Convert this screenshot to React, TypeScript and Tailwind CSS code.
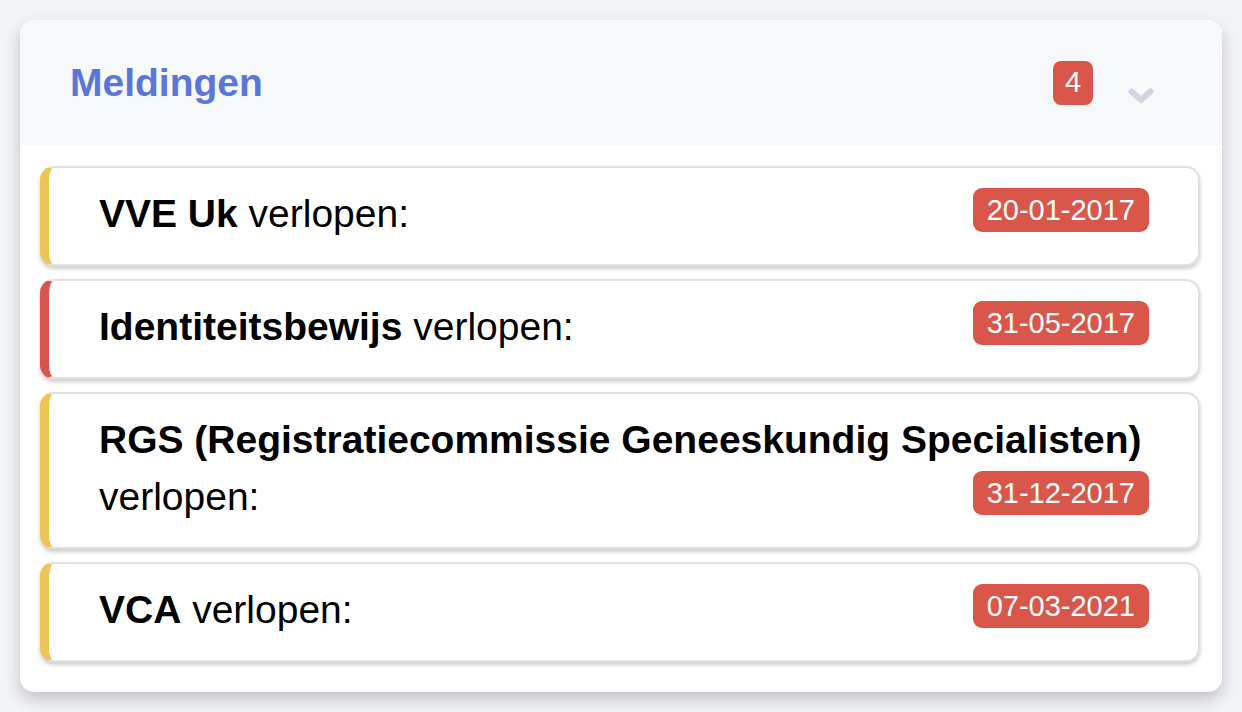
// Meldingen panel: list of expired documents with dates

type Melding = {
  title: string;
  date: string;
  tone: 'warning' | 'danger';
};

const meldingen: Melding[] = [
  { title: 'VVE Uk', date: '20-01-2017', tone: 'warning' },
  { title: 'Identiteitsbewijs', date: '31-05-2017', tone: 'danger' },
  { title: 'RGS (Registratiecommissie Geneeskundig Specialisten)', date: '31-12-2017', tone: 'warning' },
  { title: 'VCA', date: '07-03-2021', tone: 'warning' },
];

const MeldingItem = ({ melding }: { melding: Melding }) => (
  <li
    className={`rounded-[14px] border-2 border-l-[9px] border-[#e1e1e1] bg-white pl-[50px] pr-[49px] pt-[17px] pb-[22px] shadow-[0_3px_4px_rgba(0,0,0,0.2)] ${
      melding.tone === 'danger' ? 'border-l-[#d9534f]' : 'border-l-[#edc457]'
    }`}
  >
    <p className="text-[39px] leading-[57px] text-black">
      <b className="font-bold">{melding.title}</b> verlopen:
      <span className="float-right mt-[3px] h-[44px] rounded-[9px] bg-[#d9574a] px-[14px] text-[29px] leading-[44px] text-white">
        {melding.date}
      </span>
    </p>
  </li>
);

export default function App() {
  return (
    <div
      className="min-h-screen bg-[#f2f3f6] p-[20px]"
      style={{ fontFamily: '"Liberation Sans", Helvetica, Arial, sans-serif' }}
    >
      <div className="overflow-hidden rounded-[14px] bg-white shadow-[0_7px_16px_rgba(0,0,0,0.2)]">
        {/* Header */}
        <div className="flex h-[125px] items-center bg-[#f7f8fa] pl-[50px] pr-[68px]">
          <h2 className="flex-1 text-[39px] font-bold leading-none text-[#5a76d9]">Meldingen</h2>
          <span className="flex h-[44px] w-[40px] items-center justify-center rounded-[8px] bg-[#d9574a] text-[29px] leading-none text-white">
            4
          </span>
          <svg className="ml-[35px] mt-[26px]" width="26" height="16" viewBox="0 0 26 16" fill="none">
            <path d="M3.5 3.5 L13 12 L22.5 3.5" stroke="#d2d4e2" strokeWidth="6" strokeLinecap="round" strokeLinejoin="round" />
          </svg>
        </div>

        {/* List */}
        <ul className="flex flex-col gap-[13px] pl-[20px] pr-[22px] pt-[21px] pb-[30px]">
          {meldingen.map((m) => (
            <MeldingItem key={m.title} melding={m} />
          ))}
        </ul>
      </div>
    </div>
  );
}
